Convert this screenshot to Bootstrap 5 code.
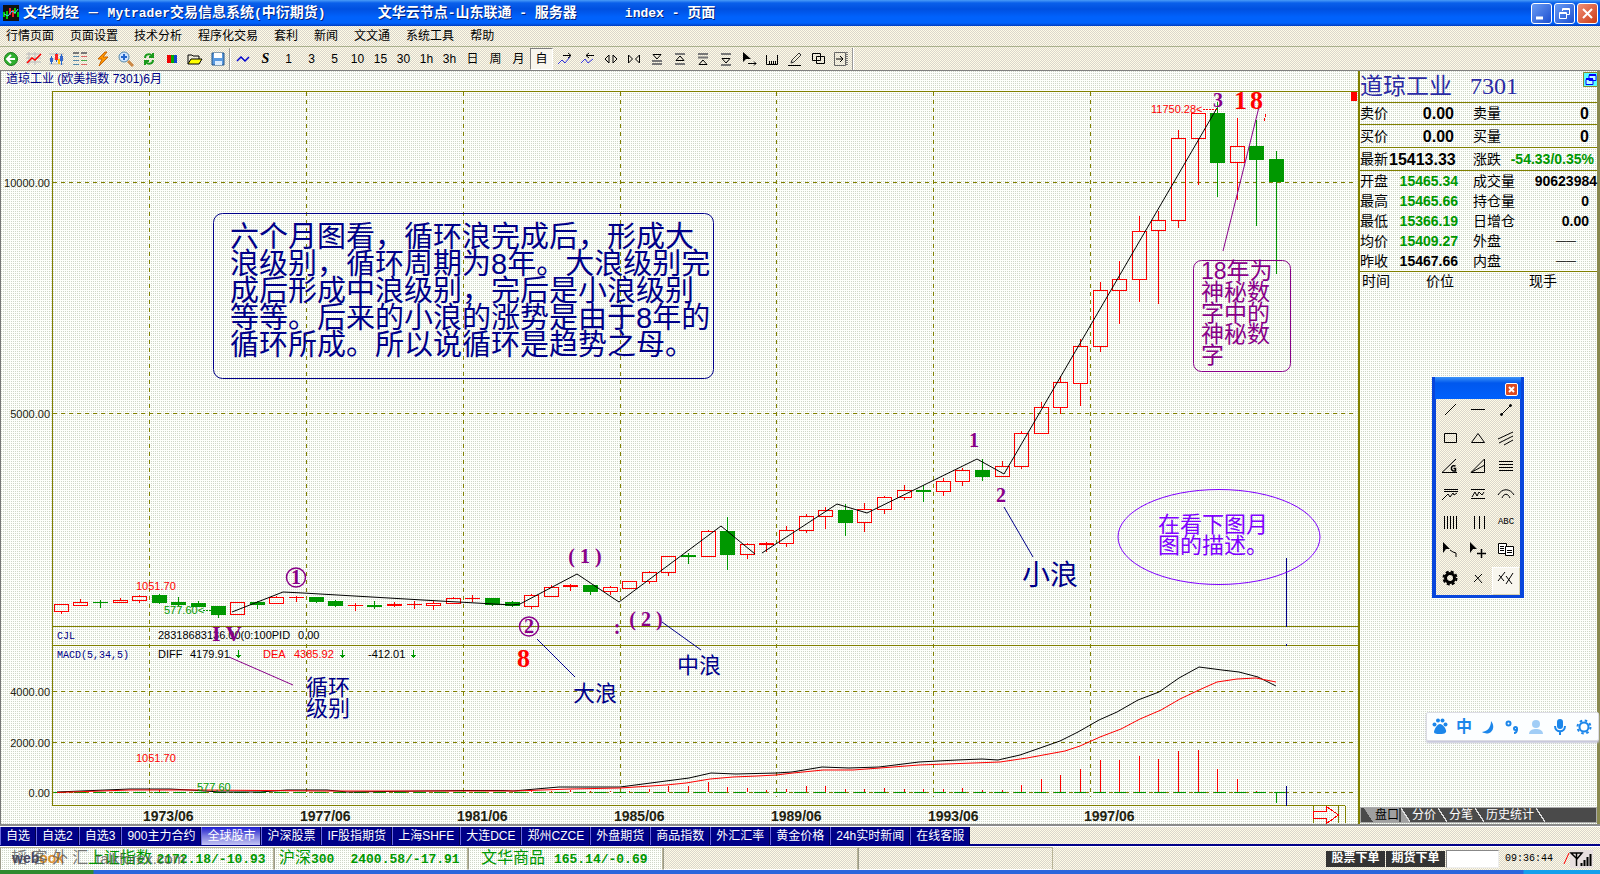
<!DOCTYPE html>
<html lang="zh-CN">
<head>
<meta charset="utf-8">
<meta name="viewport" content="width=device-width, initial-scale=1">
<title>文华财经</title>
<link href="https://cdn.jsdelivr.net/npm/bootstrap@5.3.0/dist/css/bootstrap.min.css" rel="stylesheet">
<style>
:root{--olive:#808000;--navy:#000088;--up:#f00;--down:#009800;
 --cjk:"Liberation Sans","Noto Sans CJK SC",sans-serif;--mono:"Liberation Mono","Noto Sans CJK SC",monospace}
body{font-family:var(--cjk);font-size:12px;line-height:16px;color:#000;background:#ece9d8;overflow-x:hidden}
button{font:inherit;color:inherit;border:0;background:none;padding:0}
.chrome{background:conic-gradient(#fffbe6 25%,#dad6cc 0 50%,#fffbe6 0 75%,#dad6cc 0) 0 0/2px 2px}
.paper{background:conic-gradient(#cfd6c8 25%,#fdfffb 0) 0 0/2px 2px}
.titlebar{height:26px;background:linear-gradient(#4a9cf8,#0a5fea 3px,#0050e0 9px,#0062fc 17px,#0062fc 23px,#003cc0);color:#fff;
 font:bold 13px/24px var(--mono);text-shadow:1px 1px #00217a;padding:0 2px 0 3px}
.titlebar .cn{font-size:14px}
.winbtn{width:21px;height:21px;border:1px solid #fff;border-radius:3px;background:linear-gradient(135deg,#6a9cf4,#1c4fd0)}
.winbtn svg{display:block}
.winbtn.shut{background:linear-gradient(135deg,#f09078,#cc3a14)}
.winbtns{gap:2px}
.menubar{height:21px;border-bottom:1px solid #a9b08c;padding-left:6px;gap:16px}
.menubar a{color:#000;text-decoration:none}
.toolbar{height:24px;border-bottom:1px solid #808080;margin-left:-1px}
.toolbar button{width:23px;height:22px;flex:none;display:flex;align-items:center;justify-content:center}
.toolbar button.on{border:1px solid #808080;border-right-color:#fff;border-bottom-color:#fff;background:#f8f6ee}
.sep{width:2px;height:22px;border-left:1px solid #999;border-right:1px solid #fff;flex:none}
.stage{border-bottom:2px solid #8a8a8a}
.chartbox{border-left:1px solid #777;min-width:0}
.chartbox svg text{font-family:var(--cjk)}
.t11{font-size:11px}.t12{font-size:12px}.t10{font-size:10px}
.t14{font-size:14px;font-weight:bold;fill:#222210}
svg .pen{font-family:"Liberation Serif","Noto Sans CJK SC",serif!important;font-weight:bold}
.s22{font-size:22px}.s23{font-size:23px}.s28{font-size:28px}.s29{font-size:29px}.s20{font-size:20px}.s26{font-size:26px}
.quote{width:242px;flex:none;border-left:2px solid var(--olive);border-right:3px solid #8a8a50}
.quote h1{font:23px/31px "Liberation Serif","Noto Sans CJK SC",serif;color:#2a2aa4;margin:0;height:31px;white-space:nowrap}
.quote h1 span{font-size:24px;margin-left:18px}
.quote table{width:100%;table-layout:fixed;border-top:1px solid var(--olive);border-bottom:1px solid var(--olive);border-collapse:separate;border-spacing:0}
.quote td,.quote th{padding:0;font-size:14px;line-height:20px;height:20px;white-space:nowrap;font-weight:normal}
.quote td{font-weight:bold;text-align:right}
.quote .big td{font-size:16px}
.quote .big td:nth-child(2){padding-right:4px}
.quote .big>*{height:23px;line-height:21px;border-bottom:1px solid var(--olive)}
.quote .big:first-child>*{height:22px}
.quote .big td.chg{font-size:14px;padding-right:3px}
.quote th+td+th{padding-left:15px}
.quote td.in{padding-right:8px}
.gn{color:var(--down)}
.quote td.dash{padding-right:21px;font-weight:normal;font-size:10px}
.ticks{font-size:14px;line-height:18px;padding-left:2px}
.ticks span:nth-child(1){width:64px}.ticks span:nth-child(2){width:103px}
.sidetabs{position:absolute;left:0;right:0;bottom:1px;height:16px;background:#4a4a4a;border:1px solid #aaa;color:#fff;padding-left:3px}
.sidetabs button{height:14px;line-height:14px;padding:0 11px 0 2px;background:linear-gradient(to top right,transparent 45%,#ddd 46% 54%,transparent 55%) right/9px 100% no-repeat}
.sidetabs button.on{color:#000;padding-left:11px;background:linear-gradient(to top right,#a0a0a0 45%,#ddd 46% 54%,#4a4a4a 55%) right/9px 100% no-repeat,linear-gradient(to top right,#4a4a4a 49%,#a0a0a0 50%) left/9px 100% no-repeat,linear-gradient(#a0a0a0,#a0a0a0) 9px 0/26px 100% no-repeat}
.cascade{position:absolute;right:-1px;top:1px;width:15px;height:15px}
.toolbox{position:absolute;right:73px;top:306px;width:92px;border:4px solid #0846dc;border-top-width:0;border-bottom-width:3px;background:#0846dc}
.toolbox header{height:22px;background:linear-gradient(#3c94f8,#0058ee 6px,#0060fc);padding-right:3px;margin:0 -1px}
.toolbox header button{width:13px;height:13px;border:1px solid #fff;border-radius:2px;background:#dd4a20;margin-top:3px}
.toolbox header svg{display:block}
.toolgrid{display:grid;grid-template-columns:repeat(3,1fr)}
.toolgrid button{height:28px;padding-bottom:6px;display:flex;align-items:center;justify-content:center}
.toolgrid button.on{border:1px solid #fff;border-right-color:#d8d2b0;border-bottom-color:#d8d2b0;background:#f8f6ee}
.ime{position:absolute;right:-2px;top:641px;width:173px;height:29px;background:#fcfeff;border:1px solid #dcdce4;box-shadow:0 2px 2px #c8c8dc;border-radius:2px;color:#1c86ea;padding:0 1px}
.ime button{width:24px;height:27px;display:flex;align-items:center;justify-content:center;font-weight:bold;font-size:16px}
.pages{height:20px;border-bottom:2px solid var(--navy);border-top:1px solid #fff}
.pages button{height:18px;line-height:17px;padding:0 5px;border-left:1px solid #6a6ae0;border-right:1px solid #00004c;background:var(--navy);color:#fff;flex:none}
.pages button.on{background:linear-gradient(#1c1cd0,#7c7ce0 50%,#c4c4f4)}
.status{height:24px;border-top:1px solid #fff}
.status>.cell{height:23px;border:1px solid #b8b498;border-left-color:#9a9a88;border-bottom-color:#fff;flex:none}
.idx{font:16px/20px var(--cjk);color:var(--down);white-space:nowrap}
.idx b{font:bold 13px/20px var(--mono)}
.order{width:59px;height:16px;background:#333!important;color:#fff!important;font-weight:bold;font-size:12px;line-height:15px;flex:none}
.code{width:53px;height:18px;border:1px solid #888;border-right-color:#eee;border-bottom-color:#eee;background:#fff;padding:0;flex:none}
.brand{position:absolute;left:0;top:0;width:186px;height:20px;white-space:nowrap;color:#555c}
.task{height:4px;background:linear-gradient(90deg,#2f8a30 0 93px,#2b66dc 94px calc(100% - 77px),#14a0ec calc(100% - 76px))}
</style>
</head>
<body>
<header class="titlebar d-flex align-items-center">
  <svg width="16" height="16" class="me-1 flex-shrink-0"><rect width="16" height="16" fill="#111"/><path d="M1 12V7M4 14V6M12 9V3M15 7v5" stroke="#0c0" stroke-width="2"/><path d="M7 10V3M10 12V5" stroke="#e22" stroke-width="2"/><path d="M1 9l4 2 4-5 3 2 3-4" stroke="#4df" fill="none"/></svg>
  <span style="white-space:pre"><span class="cn">文华财经</span> － Mytrader<span class="cn">交易信息系统</span>(<span class="cn">中衍期货</span>)</span>
  <span class="ms-5 ps-1"><span class="cn">文华云节点</span>-<span class="cn">山东联通</span> - <span class="cn">服务器</span></span>
  <span class="ms-5">index - <span class="cn">页面</span></span>
  <div class="winbtns ms-auto d-flex">
    <button class="winbtn" aria-label="最小化"><svg width="19" height="19"><path d="M4 14h7" stroke="#fff" stroke-width="3"/></svg></button>
    <button class="winbtn" aria-label="还原"><svg width="19" height="19" fill="none" stroke="#fff"><path d="M7.500 7V4.500h7v6H12M7 5.500h7" /><path d="M4.500 8.500h7v6h-7zM4 9.500h8"/></svg></button>
    <button class="winbtn shut" aria-label="关闭"><svg width="19" height="19"><path d="M5 5l9 9M14 5l-9 9" stroke="#fff" stroke-width="2"/></svg></button>
  </div>
</header>
<nav class="menubar chrome d-flex align-items-center">
  <a href="#">行情页面</a><a href="#">页面设置</a><a href="#">技术分析</a><a href="#">程序化交易</a><a href="#">套利</a><a href="#">新闻</a><a href="#">文文通</a><a href="#">系统工具</a><a href="#">帮助</a>
</nav>
<div class="chrome"><div class="toolbar d-flex align-items-center" role="toolbar">
  <button aria-label="后退"><svg width="16" height="16"><circle cx="8" cy="8" r="6.500" fill="#2fae2f" stroke="#167a16"/><path d="M12 8H5M8 4L4 8l4 4" stroke="#fff" stroke-width="2" fill="none"/></svg></button>
  <button aria-label="分时"><svg width="16" height="16"><path d="M0 3h15M0 7h15M0 11h15M3 1v13M9 1v13" stroke="#bbb"/><path d="M1 12l5-5 3 2 6-6" stroke="#f00" stroke-width="1.500" fill="none"/></svg></button>
  <button aria-label="K线"><svg width="16" height="16"><path d="M0 3h15M0 8h15M0 13h15" stroke="#bbb"/><path d="M2.500 5v8M7.500 2v9M12.500 3v11" stroke="#26c"/><path d="M1 7h3v4H1zM11 5h3v5h-3z" fill="#36c"/><path d="M6 3h3v6H6z" fill="#f22"/><path d="M9 8h2v5H9z" fill="#fb0"/></svg></button>
  <button aria-label="报价"><svg width="16" height="16"><path d="M1 2h6M9 2h6" stroke="#777" stroke-width="2"/><path d="M1 5.500h6M1 9.500h6M1 13.500h6" stroke="#58a"/><path d="M9 5.500h6M9 13.500h6" stroke="#d66"/><path d="M9 9.500h6" stroke="#4a4"/></svg></button>
  <button aria-label="闪电"><svg width="16" height="16"><path d="M10 1L3 8h4l-3 7 9-9H8l4-5z" fill="#f90" stroke="#c60"/></svg></button>
  <button aria-label="放大"><svg width="16" height="16"><circle cx="6" cy="6" r="5" fill="#cfe4ff" stroke="#58a"/><path d="M6 3v6M3 6h6" stroke="#26c" stroke-width="2"/><path d="M10 10l5 5" stroke="#c84" stroke-width="3"/></svg></button>
  <button aria-label="刷新"><svg width="16" height="16" fill="none" stroke="#1a9a1a" stroke-width="2"><path d="M4 7c0-4 5-5 7-2M12 9c0 4-5 5-7 2"/><path d="M12 2v4H8M4 14v-4h4"/></svg></button>
  <button aria-label="颜色"><svg width="16" height="16"><path d="M3 4h4v8H3z" fill="#e00"/><path d="M7 4h3v8H7z" fill="#0a0"/><path d="M10 4h3v8h-3z" fill="#14c"/></svg></button>
  <button aria-label="打开"><svg width="16" height="16"><path d="M1 13V4h4l1 1h6v3" fill="none" stroke="#000"/><path d="M1 13l3-5h11l-3 5z" fill="#ff0" stroke="#000"/></svg></button>
  <button aria-label="保存"><svg width="16" height="16"><path d="M2 2h12v12H2z" fill="#5a9ae0" stroke="#258"/><path d="M4 2h8v5H4z" fill="#fff"/><path d="M5 10h7v4H5z" fill="#def"/></svg></button>
  <div class="sep"></div>
  <button aria-label="折线"><svg width="16" height="16"><path d="M2 10l4-4 4 4 4-4" fill="none" stroke="#00c" stroke-width="1.500"/></svg></button>
  <button style="font:italic bold 14px 'Liberation Serif',serif">S</button>
  <button>1</button><button>3</button><button>5</button><button>10</button><button>15</button><button>30</button><button>1h</button><button>3h</button><button>日</button><button>周</button><button>月</button><button class="on">自</button>
  <button aria-label="右移"><svg width="16" height="16" fill="none"><path d="M1 13l4-4 3 3 5-6" stroke="#33d"/><path d="M6 4.500h8M11 2l3 2.500L11 7" stroke="#000"/></svg></button>
  <button aria-label="左移"><svg width="16" height="16" fill="none"><path d="M1 12l4-4 3 4 5-4" stroke="#33d"/><path d="M6 4.500h8M9 2L6 4.500 9 7" stroke="#000"/></svg></button>
  <button aria-label="拉宽"><svg width="16" height="16" fill="none" stroke="#000"><path d="M6 4v8L2 8zM10 4v8l4-4z"/></svg></button>
  <button aria-label="压缩"><svg width="16" height="16" fill="none" stroke="#000"><path d="M2.500 4v8l4-4zM13.500 4v8l-4-4z"/></svg></button>
  <button aria-label="下压"><svg width="16" height="16" fill="none" stroke="#000"><path d="M4 3.500h8L8 8z"/><path d="M3 10h10M3 13h10" stroke="#777" stroke-width="2"/></svg></button>
  <button aria-label="上提"><svg width="16" height="16" fill="none" stroke="#000"><path d="M4 9.500h8L8 5z"/><path d="M3 3h10M3 13h10" stroke="#777" stroke-width="2"/></svg></button>
  <button aria-label="上压"><svg width="16" height="16" fill="none" stroke="#000"><path d="M4 13.500h8L8 9z"/><path d="M3 3h10M3 6.500h10" stroke="#777" stroke-width="2"/></svg></button>
  <button aria-label="下提"><svg width="16" height="16" fill="none" stroke="#000"><path d="M4 7.500h8L8 12z"/><path d="M3 3h10M3 14h10" stroke="#777" stroke-width="2"/></svg></button>
  <button aria-label="选择"><svg width="16" height="16"><path d="M2 1v10l3-3h5z"/><path d="M7 12.500h8M13 10.500l2 2-2 2" stroke="#000" fill="none"/></svg></button>
  <button aria-label="标尺"><svg width="16" height="16" fill="none" stroke="#000"><path d="M2.500 4v9.500h11V4M5.500 10v3M7.500 10v3M9.500 10v3M11.500 10v3"/></svg></button>
  <button aria-label="画笔"><svg width="16" height="16" fill="none" stroke="#333"><path d="M4 12l1-3 7-7 2 2-7 7z"/><path d="M1 14.500h13" stroke="#000"/></svg></button>
  <button aria-label="窗口"><svg width="16" height="16" fill="none" stroke="#000"><path d="M2.500 2.500h8v7h-8zM6.500 5.500h8v7h-8z"/></svg></button>
  <button aria-label="面板"><svg width="16" height="16" fill="none"><path d="M1.500 1.500h11v13h-11z" stroke="#666"/><path d="M3 8h6M7 5l3 3-3 3" stroke="#000"/><path d="M14 1v14" stroke="#777" stroke-width="2" stroke-dasharray="1 1"/></svg></button>
  <div class="sep"></div>
</div></div>

<main class="stage paper d-flex">
  <section class="chartbox flex-grow-1">
    <svg id="chart" class="d-block w-100" viewBox="1 71 1357 753" shape-rendering="crispEdges" fill="none">
      <g stroke="#808000">
        <path d="M52.500 805V91.500H1358M52 626.500H1358M52 645.500H1358M52 805.500H1345M1313.500 806v17M1338.500 806v17M1345.500 806v17"/>
        <path stroke-dasharray="4 4" d="M149.500 92v705M306.500 92v705M463.500 92v705M620.500 92v705M776.500 92v705M933.500 92v705M1090.500 92v705M53 182.500H1357M53 413.500H1357M53 691.500H1357M53 742.500H1357M53 792.500H1357"/>
      </g>
      <path d="M1351 92h6v9h-6z" fill="#f00"/>
      <path d="M1313.500 811.500h13v-5l12 8.500-12 8.500v-5h-13z" stroke="#f00"/>
      <path d="M54 792.500H1285" stroke="#009800" stroke-dasharray="12 8"/>
      <g id="candles"></g>
      <g shape-rendering="auto">
      <g stroke="#000">
        <path d="M232 612l51-20 20 1 137 8 72 4 8-1 57-30 42 28L721 526l34 28M762 553l75-49 30 9 110-54 27 15L1217 108"/>
        <path d="M57 792L130 789H170L190 790 220 792H260L287 790H327L347 792 463 790.500H503L513 791 559 787H620L666 781 689 778 711 773 736 774 776 773 792 772 822 767 849 768 879 767 919 762 957 760 982 759 998 760 1020 755 1060 741 1078 732 1099 720 1117 712 1138 700 1159 692 1179 678 1199 667 1222 670 1239 672 1258 677 1276 686"/>
      </g>
      <path stroke="#f00" d="M57 792.500L130 790H200L320 791H515L570 789 620 788 666 785 686 783 710 779 733 777 757 776 776 775 793 773 823 770 853 770 880 768 919 765 1000 762 1027 758 1065 751 1080 746 1100 737 1121 729 1140 719 1161 710 1180 699 1199 690 1217 682 1237 679 1256 678 1276 682"/>
      <g stroke="#808"><path d="M1260 103l-37 148M229 657l64 28"/><rect x="1193.500" y="260.500" width="97" height="111" rx="8"/>
        <circle cx="296" cy="577.500" r="9.500" stroke-width="1.500"/><circle cx="529" cy="626.500" r="9.500" stroke-width="1.500"/></g>
      <g stroke="#000088"><path d="M537 639l38 38M662 622l39 28M1004 507l29 50M1286.500 558v69M1286.500 786v20M1286.500 644v2"/><rect x="213.500" y="213.500" width="500" height="165" rx="9"/></g>
      <ellipse cx="1219" cy="537" rx="101" ry="47.500" stroke="#8000ff"/>
      </g>
      <g class="t12" fill="#000088"><text x="6" y="83">道琼工业 (欧美指数 7301)6月</text></g>
      <g class="t10" fill="#000088"><text x="57" y="639" style="font-family:'Liberation Mono',monospace">CJL</text><text x="57" y="658" style="font-family:'Liberation Mono',monospace">MACD(5,34,5)</text></g>
      <g class="t11" fill="#222210" text-anchor="end"><text x="50" y="187">10000.00</text><text x="50" y="418">5000.00</text><text x="50" y="696">4000.00</text><text x="50" y="747">2000.00</text><text x="50" y="797">0.00</text></g>
      <g class="t11" fill="#f00"><text x="136" y="590">1051.70</text><text x="136" y="762">1051.70</text><text x="1151" y="113">11750.28&lt;</text><text x="263" y="658">DEA</text><text x="294" y="658">4385.92</text></g>
      <path d="M1203 109.500h14" stroke="#f00" stroke-dasharray="2 1"/>
      <path d="M203 610.500h9" stroke="#009800" stroke-dasharray="2 1"/>
      <g class="t11" fill="#009800"><text x="164" y="614">577.60&lt;</text><text x="197" y="791">577.60</text></g>
      <path d="M238.500 650v8M236 655.500h5M237 656.500h3M342.500 650v8M340 655.500h5M341 656.500h3M413.500 650v8M411 655.500h5M412 656.500h3" stroke="#009800"/>
      <g class="t11" fill="#000"><text x="158" y="639">28318683136.00(0:100PID</text><text x="298" y="639">0.00</text><text x="158" y="658">DIFF</text><text x="190" y="658">4179.91</text><text x="368" y="658">-412.01</text></g>
      <g class="t14"><text x="143" y="821">1973/06</text><text x="300" y="821">1977/06</text><text x="457" y="821">1981/06</text><text x="614" y="821">1985/06</text><text x="771" y="821">1989/06</text><text x="928" y="821">1993/06</text><text x="1084" y="821">1997/06</text></g>
      <g fill="#000088">
        <g class="s29"><text x="230" y="247">六个月图看，循环浪完成后，形成大</text><text x="230" y="274">浪级别，循环周期为8年。大浪级别完</text><text x="230" y="301">成后形成中浪级别，完后是小浪级别</text><text x="230" y="328">等等。后来的小浪的涨势是由于8年的</text><text x="230" y="355">循环所成。所以说循环是趋势之母。</text></g>
        <g class="s22"><text x="306" y="695">循环</text><text x="306" y="716">级别</text><text x="573" y="701">大浪</text><text x="677" y="673">中浪</text></g>
        <g class="s28"><text x="1022" y="585">小浪</text></g>
      </g>
      <g fill="#808">
        <g class="s23"><text x="1201" y="279">18年为</text><text x="1201" y="300">神秘数</text><text x="1201" y="321">字中的</text><text x="1201" y="342">神秘数</text><text x="1201" y="363">字</text></g>
        <g class="s20" text-anchor="middle"><text class="pen" x="296" y="584">1</text><text class="pen" x="529" y="633">2</text><text class="pen" x="1218" y="107">3</text><text class="pen" x="974" y="447">1</text><text class="pen" x="1001" y="502">2</text><text class="pen" x="585" y="563">( 1 )</text><text class="pen" x="646" y="626">( 2 )</text><text class="pen" x="617" y="634">:</text></g>
        <text class="pen s22" x="212" y="641">I V</text>
      </g>
      <g fill="#8000ff" class="s22"><text x="1158" y="532">在看下图月</text><text x="1158" y="553">图的描述。</text></g>
      <g fill="#f00" class="s26"><text class="pen" x="1234" y="109">1</text><text class="pen" x="1250" y="109">8</text><text class="pen" x="517" y="667">8</text></g>
      <path d="M1264.500 118v3M1265.500 114v3" stroke="#f00"/>
    </svg>
  </section>
  <aside class="quote position-relative">
    <h1>道琼工业<span>7301</span></h1>
    <button class="cascade" aria-label="窗口"><svg class="d-block" width="15" height="15"><path d="M0 0h15v15H0z" fill="#5ff"/><path d="M6 3.500h7v5H6zM3 7.500h7v5H3z" fill="#bff" stroke="#00f"/><path d="M6 3h7M3 7h7" stroke="#00f" stroke-width="2"/><path d="M.5.5h14v14H.5z" fill="none" stroke="#8a8a30"/></svg></button>
    <table>
      <colgroup><col style="width:29px"><col style="width:69px"><col style="width:50px"><col></colgroup>
      <tr class="big"><th>卖价</th><td>0.00</td><th>卖量</th><td class="in">0</td></tr>
      <tr class="big"><th>买价</th><td>0.00</td><th>买量</th><td class="in">0</td></tr>
      <tr class="big"><th>最新</th><td>15413.33</td><th>涨跌</th><td class="chg gn">-54.33/0.35%</td></tr>
      <tr><th>开盘</th><td class="gn">15465.34</td><th>成交量</th><td>90623984</td></tr>
      <tr><th>最高</th><td class="gn">15465.66</td><th>持仓量</th><td class="in">0</td></tr>
      <tr><th>最低</th><td class="gn">15366.19</td><th>日增仓</th><td class="in">0.00</td></tr>
      <tr><th>均价</th><td class="gn">15409.27</td><th>外盘</th><td class="dash">——</td></tr>
      <tr><th>昨收</th><td>15467.66</td><th>内盘</th><td class="dash">——</td></tr>
    </table>
    <div class="ticks d-flex"><span>时间</span><span>价位</span><span>现手</span></div>

    <div class="toolbox">
      <header class="d-flex justify-content-end align-items-center"><button aria-label="关闭工具"><svg width="11" height="11"><path d="M3 3l5 5M8 3L3 8" stroke="#fff" stroke-width="2"/></svg></button></header>
      <div class="toolgrid chrome">
        <button aria-label="直线"><svg width="16" height="16" stroke="#000"><path d="M3 13L14 2"/></svg></button>
        <button aria-label="水平线"><svg width="16" height="16" stroke="#000"><path d="M1 7.500h14"/></svg></button>
        <button aria-label="线段"><svg width="16" height="16" stroke="#000"><path d="M3 13L13 3"/><circle cx="3.500" cy="12.500" r="1"/><circle cx="12.500" cy="3.500" r="1"/></svg></button>
        <button aria-label="矩形"><svg width="16" height="16" stroke="#000" fill="none"><path d="M2.500 3.500h12v9h-12z"/></svg></button>
        <button aria-label="三角形"><svg width="16" height="16" stroke="#000" fill="none"><path d="M1.500 12.500L8 3.500l6.500 9z"/></svg></button>
        <button aria-label="平行线"><svg width="16" height="16" stroke="#000"><path d="M0 9l15-7M1 13l14-7M6 15l9-5"/></svg></button>
        <button aria-label="甘氏角"><svg width="18" height="16" stroke="#000" fill="none"><path d="M16 14.500H1L15 1"/><path d="M14.500 8c-5-2-5 5-2 5h2v-2.500h-2" stroke-width="1.500"/></svg></button>
        <button aria-label="扇形线"><svg width="16" height="16" stroke="#000" fill="none"><path d="M14.500 1v13.500H1zM1 14.500l13-7"/></svg></button>
        <button aria-label="黄金分割"><svg width="16" height="16" stroke="#000"><path d="M1 3.500h14M1 6.500h14M1 9.500h14M1 12.500h14"/></svg></button>
        <button aria-label="百分比线"><svg width="18" height="16" stroke="#000" fill="none"><path d="M3 3.500h14M3 5.500h14M1 14l6-6 2 3 3-4 1 2 3-2"/></svg></button>
        <button aria-label="波段线"><svg width="16" height="16" stroke="#000" fill="none"><path d="M1 3.500h14M1 12.500h14M2 11l3-5 2 4 2-4 3 3 2-3"/></svg></button>
        <button aria-label="弧线"><svg width="18" height="16" stroke="#000" fill="none"><path d="M1 9c4-7 12-7 16 0M5 12c2-5 6-5 8 0"/></svg></button>
        <button aria-label="等周期线"><svg width="16" height="16" stroke="#000"><path d="M2.500 2v13M5.500 2v13M8.500 2v13M11.500 2v13M14.500 2v13"/></svg></button>
        <button aria-label="周期线"><svg width="16" height="16" stroke="#000"><path d="M4.500 2v13M9.500 2v13M14.500 2v13"/></svg></button>
        <button style="font:9px var(--mono)">ABC</button>
        <button aria-label="选取"><svg width="18" height="18"><path d="M2 1v11l3-4h4z"/><path d="M9 9l3 2 3 1v4" stroke="#000" fill="none"/></svg></button>
        <button aria-label="移动"><svg width="18" height="18"><path d="M1 1v11l3-4h4z"/><path d="M8 12.500h9M12.500 8v9" stroke="#000" stroke-width="1.500"/></svg></button>
        <button aria-label="复制"><svg width="18" height="16" stroke="#000" fill="#fff"><path d="M1.500 1.500h8v10h-8z"/><path d="M8.500 4.500h8v9h-8zM3 4.500h4M3 6.500h4M3 8.500h4M10 8.500h5M10 10.500h5"/></svg></button>
        <button aria-label="设置"><svg width="16" height="16" fill="none" stroke="#000"><circle cx="8" cy="8" r="4.500" stroke-width="3"/><circle cx="8" cy="8" r="6.500" stroke-width="2" stroke-dasharray="3 2.100"/></svg></button>
        <button aria-label="删除"><svg width="16" height="16" stroke="#000"><path d="M5 5l7 8M12 4l-8 8"/></svg></button>
        <button class="on" aria-label="全部删除"><svg width="18" height="16" stroke="#000" fill="none"><path d="M2 5l5 6M8 2l-7 9M9 6l6 8M16 3L9 14"/></svg></button>
      </div>
    </div>

    <div class="ime d-flex">
      <button aria-label="输入法"><svg width="16" height="17" fill="currentColor"><circle cx="2.500" cy="6.500" r="2"/><circle cx="6" cy="2.500" r="2"/><circle cx="10.500" cy="2.500" r="2"/><circle cx="13.500" cy="6.500" r="2"/><path d="M8 6c3 0 7 6 6 8s-4 2-6 2-6 0-6-2 3-8 6-8z"/></svg></button>
      <button>中</button>
      <button aria-label="半角"><svg width="14" height="14" fill="currentColor"><path d="M10 1c6 7-1 16-9 11 6-1 9-5 9-11z"/></svg></button>
      <button aria-label="标点"><svg width="14" height="16" fill="none" stroke="currentColor" stroke-width="2"><circle cx="3.500" cy="4.500" r="2"/><circle cx="10.500" cy="9.500" r="1.500"/><path d="M12 10c0 3-1 4-3 4"/></svg></button>
      <button aria-label="用户" style="opacity:.4"><svg width="14" height="16" fill="currentColor"><circle cx="7" cy="5" r="4"/><path d="M0 15c0-4 4-5 7-5s7 1 7 5z"/></svg></button>
      <button aria-label="语音"><svg width="14" height="18" fill="none" stroke="currentColor" stroke-width="2"><rect x="4" y="1" width="6" height="10" rx="3" fill="currentColor" stroke="none"/><path d="M2 8c0 7 10 7 10 0M7 13v4"/></svg></button>
      <button aria-label="选项"><svg width="16" height="16" fill="none" stroke="currentColor"><circle cx="8" cy="8" r="4.500" stroke-width="2"/><circle cx="8" cy="8" r="6.500" stroke-width="2" stroke-dasharray="2.500 2.600"/></svg></button>
    </div>
    <div class="sidetabs d-flex"><button class="on">盘口</button><button>分价</button><button>分笔</button><button>历史统计</button></div>
  </aside>
</main>

<nav class="pages chrome d-flex">
  <button>自选</button><button>自选2</button><button>自选3</button><button>900主力合约</button><button class="on">全球股市</button><button>沪深股票</button><button>IF股指期货</button><button>上海SHFE</button><button>大连DCE</button><button>郑州CZCE</button><button>外盘期货</button><button>商品指数</button><button>外汇汇率</button><button>黄金价格</button><button>24h实时新闻</button><button>在线客服</button>
</nav>
<footer class="status chrome d-flex align-items-center">
  <div class="cell idx paper position-relative" style="width:274px;padding-left:87px">上证指数 <b>2172.18/-10.93</b>
    <div class="brand"><span class="position-absolute" style="left:11px;color:#d9902e;font:bold 14px/20px var(--cjk)"><span style="color:#446">web</span>ook</span><span class="position-absolute" style="left:10px">韬 客 外 汇</span><span class="position-absolute" style="left:95px;font-size:15px;line-height:22px">talkforex.com</span></div>
  </div>
  <div class="cell idx paper ps-1" style="width:194px">沪深<b class="me-3">300</b><b>2400.58/-17.91</b></div>
  <div class="cell idx paper" style="width:195px;padding-left:12px">文华商品 &nbsp;<b>165.14/-0.69</b></div>
  <div class="cell" style="width:195px"></div>
  <div class="cell" style="width:195px"></div>
  <div class="ms-auto d-flex align-items-center" style="padding-right:7px">
    <button class="order">股票下单</button><button class="order" style="margin:0 1px">期货下单</button>
    <input class="code" type="text" aria-label="代码">
    <span style="margin:0 10px 0 6px;font:10px/16px var(--mono)">09:36:44</span>
    <svg width="30" height="18"><path d="M1 14L6 3" stroke="#f00"/><path d="M7 0h23v18H7z" fill="#e8dfe0"/><path d="M8 3h11l-5 6zM13.500 3v13" stroke="#000" stroke-width="1.500" fill="none"/><path d="M18.500 16v-3M21.500 16v-6M24.500 16V7M27.500 16V4" stroke="#000" stroke-width="2"/></svg>
  </div>
</footer>
<div class="task"></div>

<script src="https://cdn.jsdelivr.net/npm/bootstrap@5.3.0/dist/js/bootstrap.bundle.min.js"></script>
<script>
// Each half-year bar: direction, high, body top, body bottom, low (chart units)
const bars=[['r',604,604,611,613],['r',599,602,605,605],['g',600,602,602,607],['r',598,600,602,602],['r',595,596,600,602],['g',594,595,602,603],['g',597,602,604,605],['g',601,603,606,606],['g',606,606,614,617],['r',602,602,614,614],['g',601,602,604,608],['r',596,597,603,603],['r',596,597,597,601],['g',597,597,601,602],['g',600,601,605,606],['r',603,605,605,610],['g',601,605,606,608],['r',602,604,605,606],['r',601,604,604,608],['r',601,603,605,609],
['r',597,598,603,603],['r',595,598,598,601],['g',598,598,604,605],['g',601,602,605,606],['r',594,595,606,608],['r',585,587,596,596],['r',584,585,586,590],['g',585,585,591,594],['r',586,587,591,594],['r',581,581,588,588],['r',571,572,581,583],['r',556,556,572,575],['g',553,555,556,563],['r',530,531,556,556],['g',517,531,554,569],['r',543,544,554,558],['r',542,543,544,551],['r',526,530,543,546],['r',514,516,530,532],['r',507,510,516,528],['g',504,510,522,535],['r',503,509,522,531],['r',496,497,509,513],['r',485,490,497,499],['g',485,490,491,501],['r',478,481,491,495],['r',468,470,481,485],['g',459,470,476,480],['r',461,466,476,476],
['r',431,433,466,468],['r',402,407,433,433],['r',376,382,407,413],['r',339,346,383,405],['r',282,290,346,351],['r',261,279,290,323],['r',216,231,279,301],['r',211,220,230,303],['r',130,138,220,227],['r',113,113,138,184],['g',102,113,162,196],['r',118,146,162,199],['g',120,146,159,225],['g',151,159,181,273]];
const hist={5:790,24:791,25:791,26:790,27:791,28:791,29:791,30:789,31:786,32:786,33:782,34:787,35:788,36:790,37:789,38:786,39:786,40:789,41:789,42:788,43:789,44:789,45:789,46:788,47:790,48:790,49:785,50:779,51:775,52:769,53:760,54:760,55:756,56:759,57:751,58:750,59:769,60:779,61:791};
let out='';
bars.forEach(([k,h,t,b,l],i)=>{
  const x=Math.floor(61.2+19.6*i),c=k==='r'?'#f00':'#009800';
  if(k==='g'||b-t<2){
    out+=`<path d="M${x+.5} ${h}V${l+1}" stroke="${c}"/><path d="M${x-7} ${t}h15v${b-t+1}h-15z" fill="${c}"/>`;
  }else{
    out+=`<path d="M${x+.5} ${h}V${t}M${x+.5} ${b}V${l+1}M${x-6.5} ${t+.5}h14v${b-t}h-14z" stroke="${c}"/>`;
  }
  if(hist[i])out+=`<path d="M${x+.5} ${hist[i]}V792" stroke="#f00"/>`;
});
out+='<path d="M1276.5 792v11" stroke="#009800"/>';
document.getElementById('candles').innerHTML=out;
</script>
</body>
</html>
